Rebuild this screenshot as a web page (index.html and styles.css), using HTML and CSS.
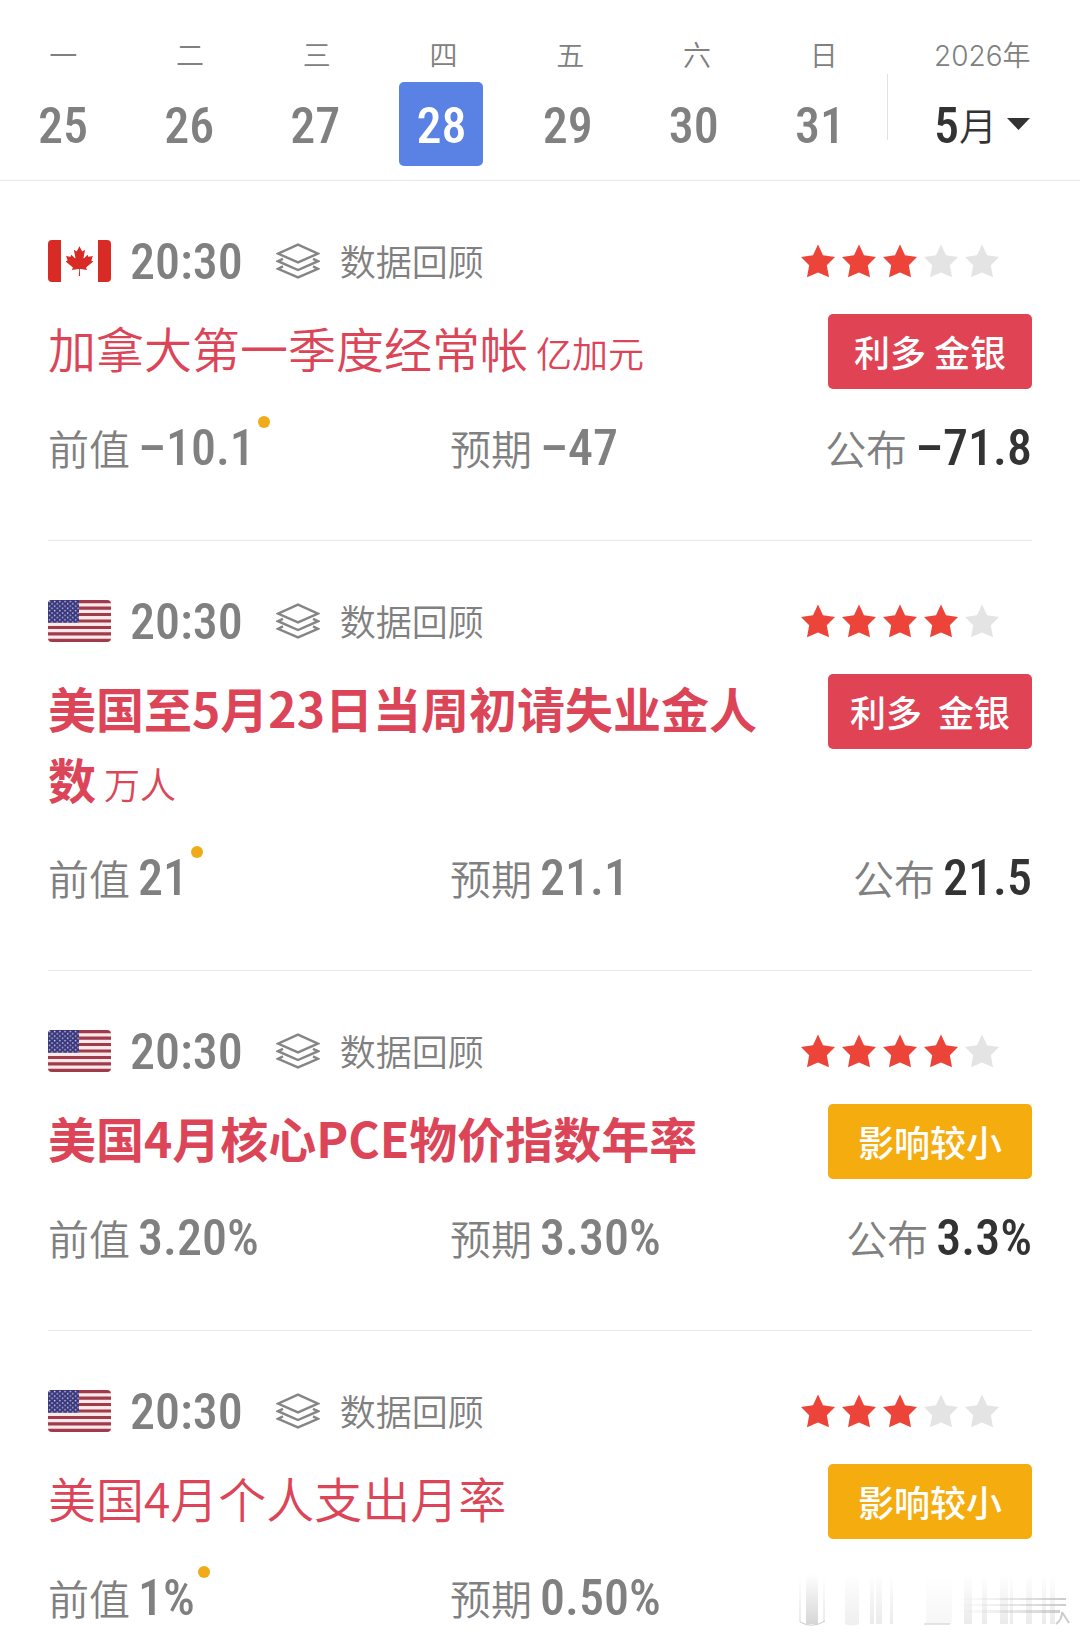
FILE: index.html
```html
<!DOCTYPE html>
<html lang="zh-CN">
  <head>
    <meta charset="UTF-8" />
    <meta name="viewport" content="width=device-width, initial-scale=1.0" />
    <title>财经日历</title>
    <link rel="stylesheet" href="styles.css">
  </head>
  <body>
    <!-- 公用图标 -->
    <svg class="defs" width="0" height="0" aria-hidden="true">
      <defs>
        <symbol id="flag-ca" viewBox="0 0 63 42">
          <rect width="63" height="42" fill="#fff" />
          <rect width="13" height="42" fill="#d92b26" />
          <rect x="50" width="13" height="42" fill="#d92b26" />
          <path
            fill="#d92b26"
            transform="translate(-4.2 3.2) scale(0.00743)"
            d="m4890 4430-45-863a95 95 0 0 1 111-98l859 151-116-320a65 65 0 0 1 20-73l941-762-212-99a65 65 0 0 1-34-79l186-572-542 115a65 65 0 0 1-73-38l-105-247-423 454a65 65 0 0 1-111-57l204-1052-327 189a65 65 0 0 1-91-27l-332-652-332 652a65 65 0 0 1-91 27l-327-189 204 1052a65 65 0 0 1-111 57l-423-454-105 247a65 65 0 0 1-73 38l-542-115 186 572a65 65 0 0 1-34 79l-212 99 941 762a65 65 0 0 1 20 73l-116 320 859-151a95 95 0 0 1 111 98l-45 863z" />
        </symbol>
        <pattern id="dots" width="5.2" height="4.6" patternUnits="userSpaceOnUse">
          <circle cx="1.5" cy="1.4" r="0.8" fill="#d5d3ea" />
          <circle cx="4.1" cy="3.7" r="0.8" fill="#d5d3ea" />
        </pattern>
        <symbol id="flag-us" viewBox="0 0 63 42">
          <rect width="63" height="42" fill="#f6e9ea" />
          <path
            stroke="#a13a4b"
            stroke-width="3.23"
            d="M0 1.6h63M0 8.1h63M0 14.5h63M0 21h63M0 27.5h63M0 33.9h63M0 40.4h63" />
          <rect width="31" height="22.6" fill="#38377c" />
          <rect width="31" height="22.6" fill="url(#dots)" />
        </symbol>
        <symbol id="layers" viewBox="0 0 44 36">
          <g fill="none" stroke="#858585" stroke-width="2.4">
            <path d="M22 1.6L42 10.6L22 19.4L2 10.6Z" />
            <path d="M7 15.8L2 18.2L22 27L42 18.2L37 15.8" />
            <path d="M7 23.4L2 25.8L22 34.4L42 25.8L37 23.4" />
          </g>
        </symbol>
        <symbol id="star" viewBox="0 0 34 34">
          <path d="M17 0.5L22 11.3L34 13L25.8 21.2L28 33.2L17 28.6L6 33.2L8.2 21.2L0 13L12 11.3Z" />
        </symbol>
      </defs>
    </svg>

    <header class="calendar">
      <div class="week">
        <div class="names">
          <span class="name">一</span>
          <span class="name">二</span>
          <span class="name">三</span>
          <span class="name">四</span>
          <span class="name">五</span>
          <span class="name">六</span>
          <span class="name">日</span>
        </div>
        <div class="dates">
          <button class="date">25</button>
          <button class="date">26</button>
          <button class="date">27</button>
          <button class="date active">28</button>
          <button class="date">29</button>
          <button class="date">30</button>
          <button class="date">31</button>
        </div>
      </div>
      <div class="line"></div>
      <div class="month">
        <span class="name">2026年</span>
        <button class="pick">
          <b>5</b>月
          <svg width="23" height="12" viewBox="0 0 23 12"><path d="M0 0H23L11.5 12Z" /></svg>
        </button>
      </div>
    </header>

    <main class="list">
      <article class="item">
        <div class="top">
          <svg class="flag"><use href="#flag-ca" /></svg>
          <time class="time">20:30</time>
          <a class="review" href="#"><svg class="layers"><use href="#layers" /></svg><span>数据回顾</span></a>
          <div class="stars" role="img" aria-label="3/5">
            <svg class="on"><use href="#star" /></svg>
            <svg class="on"><use href="#star" /></svg>
            <svg class="on"><use href="#star" /></svg>
            <svg><use href="#star" /></svg>
            <svg><use href="#star" /></svg>
          </div>
        </div>
        <div class="middle">
          <h2 class="title">加拿大第一季度经常帐<small> 亿加元</small></h2>
          <span class="tag red">利多 金银</span>
        </div>
        <div class="values">
          <p><span>前值</span> <b class="dot">–10.1</b></p>
          <p><span>预期</span> <b>–47</b></p>
          <p class="actual"><span>公布</span> <b>–71.8</b></p>
        </div>
      </article>

      <article class="item">
        <div class="top">
          <svg class="flag"><use href="#flag-us" /></svg>
          <time class="time">20:30</time>
          <a class="review" href="#"><svg class="layers"><use href="#layers" /></svg><span>数据回顾</span></a>
          <div class="stars" role="img" aria-label="4/5">
            <svg class="on"><use href="#star" /></svg>
            <svg class="on"><use href="#star" /></svg>
            <svg class="on"><use href="#star" /></svg>
            <svg class="on"><use href="#star" /></svg>
            <svg><use href="#star" /></svg>
          </div>
        </div>
        <div class="middle">
          <h2 class="title bold">美国至5月23日当周初请失业金人数<small> 万人</small></h2>
          <span class="tag red">利多&nbsp; 金银</span>
        </div>
        <div class="values">
          <p><span>前值</span> <b class="dot">21</b></p>
          <p><span>预期</span> <b>21.1</b></p>
          <p class="actual"><span>公布</span> <b>21.5</b></p>
        </div>
      </article>

      <article class="item">
        <div class="top">
          <svg class="flag"><use href="#flag-us" /></svg>
          <time class="time">20:30</time>
          <a class="review" href="#"><svg class="layers"><use href="#layers" /></svg><span>数据回顾</span></a>
          <div class="stars" role="img" aria-label="4/5">
            <svg class="on"><use href="#star" /></svg>
            <svg class="on"><use href="#star" /></svg>
            <svg class="on"><use href="#star" /></svg>
            <svg class="on"><use href="#star" /></svg>
            <svg><use href="#star" /></svg>
          </div>
        </div>
        <div class="middle">
          <h2 class="title bold">美国4月核心PCE物价指数年率</h2>
          <span class="tag yellow">影响较小</span>
        </div>
        <div class="values">
          <p><span>前值</span> <b>3.20%</b></p>
          <p><span>预期</span> <b>3.30%</b></p>
          <p class="actual"><span>公布</span> <b>3.3%</b></p>
        </div>
      </article>

      <article class="item">
        <div class="top">
          <svg class="flag"><use href="#flag-us" /></svg>
          <time class="time">20:30</time>
          <a class="review" href="#"><svg class="layers"><use href="#layers" /></svg><span>数据回顾</span></a>
          <div class="stars" role="img" aria-label="3/5">
            <svg class="on"><use href="#star" /></svg>
            <svg class="on"><use href="#star" /></svg>
            <svg class="on"><use href="#star" /></svg>
            <svg><use href="#star" /></svg>
            <svg><use href="#star" /></svg>
          </div>
        </div>
        <div class="middle">
          <h2 class="title">美国4月个人支出月率</h2>
          <span class="tag yellow">影响较小</span>
        </div>
        <div class="values">
          <p><span>前值</span> <b class="dot">1%</b></p>
          <p><span>预期</span> <b>0.50%</b></p>
        </div>
        <!-- 右下角的淡色痕迹 -->
        <svg class="smear" width="280" height="56" viewBox="0 0 280 56" aria-hidden="true">
          <defs>
            <linearGradient id="fade" x1="0" y1="0" x2="0" y2="1">
              <stop offset="0" stop-color="#bbb" stop-opacity="0" />
              <stop offset="1" stop-color="#bbb" stop-opacity="0.6" />
            </linearGradient>
            <linearGradient id="side" x1="0" y1="0" x2="1" y2="0">
              <stop offset="0" stop-color="#bbb" stop-opacity="0" />
              <stop offset="1" stop-color="#aaa" stop-opacity="0.6" />
            </linearGradient>
          </defs>
          <g fill="url(#fade)">
            <path d="M8 0h12v50h-12z" />
            <path d="M1 0h2v48h-2zM25 0h2v48h-2z" opacity="0.5" />
            <path d="M47 0h14v50q-7 3-14 0z" opacity="0.4" />
            <path d="M72 0h4v50h-4zM78 0h6v50h-6zM92 0h3v50h-3z" opacity="0.5" />
            <path d="M128 0h26v50h-26z" opacity="0.2" />
            <path d="M166 0h8v50h-8zM184 0h5v50h-5zM202 0h8v50h-8zM212 0h3v50h-3zM228 0h6v50h-6zM244 0h4v50h-4zM252 0h5v50h-5z" opacity="0.5" />
          </g>
          <path d="M2 48q12 7 25-1M126 50h26" fill="none" stroke="#ccc" />
          <path d="M160 24h108v2h-108zM160 30h108v2h-108zM160 36h102v3h-102z" fill="url(#side)" />
          <path d="M258 50q6-4 6-12M264 38l7 11" fill="none" stroke="#ccc" stroke-width="2" />
        </svg>
      </article>
    </main>
  </body>
</html>
```
FILE: styles.css
```css
* {
  box-sizing: border-box;
  margin: 0;
  padding: 0;
}

body {
  font-family: "Noto Sans CJK SC", sans-serif;
  font-weight: 350;
  color: #808080;
  background-color: #fff;
}

button {
  font: inherit;
  color: inherit;
  background: none;
  border: none;
  cursor: pointer;
}

.defs {
  position: absolute;
}

/* 顶部日历 */
.calendar {
  display: flex;
  padding: 38px 0 14px;
  border-bottom: 1px solid #e8e8e8;
}

.week {
  flex: 1;
}

.names,
.dates {
  display: grid;
  grid-template-columns: repeat(7, 1fr);
  justify-items: center;
}

.dates {
  margin-top: 8px;
  padding-right: 4px;
}

.name {
  font-family: Inter, "Noto Sans CJK SC", sans-serif;
  font-size: 28px;
  line-height: 36px;
}

.date {
  width: 84px;
  height: 84px;
  padding-top: 3px;
  border-radius: 5px;
  font-family: "Roboto Condensed", "Noto Sans CJK SC", sans-serif;
  font-size: 50px;
  font-weight: 500;
}

.date.active {
  background-color: #5a82e4;
  color: #fff;
}

.line {
  width: 1px;
  height: 66px;
  margin-top: 36px;
  background-color: #e2e2e2;
}

.month {
  width: 192px;
  padding-left: 46px;
}

.month .name {
  display: block;
  margin-bottom: 8px;
}

.pick {
  display: flex;
  align-items: center;
  height: 84px;
  font-size: 38px;
  line-height: 50px;
  color: #333;
}

.pick b {
  padding-top: 3px;
}

.pick svg {
  margin-left: 10px;
  fill: #333;
}

.pick b,
.values b {
  font-family: "Roboto Condensed", "Noto Sans CJK SC", sans-serif;
  font-size: 50px;
  font-weight: 500;
  line-height: 50px;
}

/* 数据列表 */
.list {
  padding: 0 48px;
}

.item {
  position: relative;
  padding: 57px 0 64px;
  border-bottom: 1px solid #e8e8e8;
}

.item:last-child {
  padding-bottom: 14px;
  border-bottom: none;
}

.top {
  display: flex;
  align-items: center;
  height: 46px;
}

.flag {
  width: 63px;
  height: 42px;
  border-radius: 4px;
}

.time {
  margin-left: 19px;
  padding-top: 2px;
  font-family: "Roboto Condensed", "Noto Sans CJK SC", sans-serif;
  font-size: 50px;
  font-weight: 500;
  line-height: 50px;
}

.review {
  display: flex;
  align-items: center;
  gap: 20px;
  margin-left: 33px;
  font-size: 36px;
  line-height: 44px;
  color: inherit;
  text-decoration: none;
}

.review span {
  padding-bottom: 2px;
}

.layers {
  width: 44px;
  height: 36px;
}

.stars {
  display: flex;
  gap: 7px;
  margin-left: auto;
  margin-right: 33px;
}

.stars svg {
  width: 34px;
  height: 34px;
  fill: #e4e4e4;
}

.stars .on {
  fill: #ec4438;
}

.middle {
  display: flex;
  justify-content: space-between;
  align-items: flex-start;
  gap: 64px;
  padding-top: 28px;
}

.title {
  padding-bottom: 5px;
  font-size: 48px;
  font-weight: 350;
  line-height: 71px;
  color: #dc4558;
}

.title.bold {
  font-weight: 700;
}

.title small {
  font-size: 36px;
  font-weight: 350;
  line-height: 36px;
}

.tag {
  flex: none;
  width: 204px;
  margin-top: 2px;
  border-radius: 5px;
  font-size: 36px;
  font-weight: 500;
  line-height: 75px;
  text-align: center;
  color: #fff;
}

.tag.red {
  background-color: #e04354;
}

.tag.yellow {
  background-color: #f5ac0f;
}

.values {
  display: grid;
  grid-template-columns: 402px 1fr auto;
  margin-top: 31px;
}

.values p {
  display: flex;
  align-items: center;
  gap: 8px;
  height: 56px;
  font-size: 41px;
  line-height: 50px;
}

.values span {
  padding-bottom: 3px;
}

.actual b {
  color: #333;
}

.dot {
  position: relative;
}

.dot::after {
  content: "";
  position: absolute;
  top: -7px;
  right: -15px;
  width: 12px;
  height: 12px;
  border-radius: 50%;
  background-color: #f0ac18;
}

.smear {
  position: absolute;
  right: -46px;
  bottom: 10px;
}
```
